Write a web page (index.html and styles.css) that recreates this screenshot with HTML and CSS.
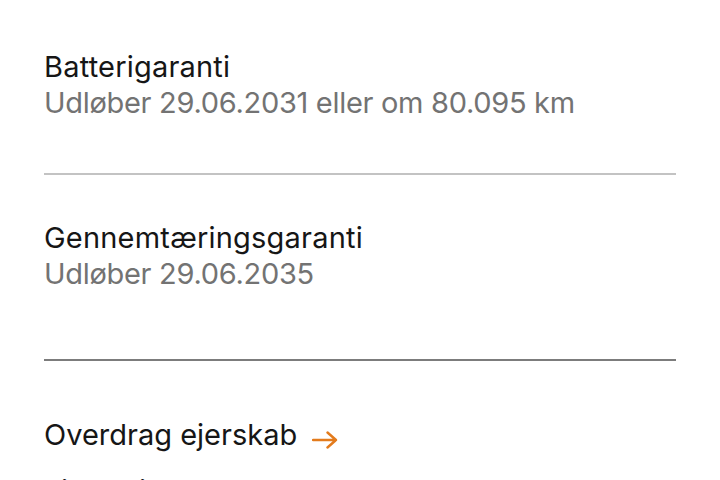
FILE: index.html
```html
<!DOCTYPE html>
<html lang="da">
<head>
<meta charset="utf-8">
<link rel="stylesheet" href="styles.css">
</head>
<body>
<main class="list">
  <section class="item item-first">
    <div class="title">Batterigaranti</div>
    <div class="sub">Udløber 29.06.2031 eller om 80.095 km</div>
  </section>
  <hr class="divider light">
  <section class="item item-second">
    <div class="title">Gennemtæringsgaranti</div>
    <div class="sub">Udløber 29.06.2035</div>
  </section>
  <hr class="divider dark">
  <a class="link link-first" href="#">
    <span>Overdrag ejerskab</span>
    <svg class="arrow" viewBox="0 0 26 18" width="26" height="18"><path d="M1 9H24M15.5 1.5L24 9L15.5 16.5" fill="none" stroke="#e37b1c" stroke-width="2.4" stroke-linecap="round" stroke-linejoin="round"/></svg>
  </a>
  <a class="link link-next" href="#">
    <span>Firmabil</span>
    <svg class="arrow" viewBox="0 0 26 18" width="26" height="18"><path d="M1 9H24M15.5 1.5L24 9L15.5 16.5" fill="none" stroke="#e37b1c" stroke-width="2.4" stroke-linecap="round" stroke-linejoin="round"/></svg>
  </a>
</main>
</body>
</html>
```

FILE: styles.css
```css
html, body {
  margin: 0;
  padding: 0;
  background: #ffffff;
  height: 480px;
  overflow: hidden;
}
body {
  font-family: "Inter", "Liberation Sans", sans-serif;
  font-size: 29px;
  line-height: 36px;
  letter-spacing: 0;
}
.list {
  display: flex;
  flex-direction: column;
  padding: 0 44px;
}
.item-first {
  padding-top: 49px;
}
.title {
  color: #161616;
  letter-spacing: 0.2px;
}
.sub {
  color: #737373;
  letter-spacing: -0.3px;
}
.divider {
  border: 0;
  height: 2px;
  margin: 0;
}
.divider.light {
  background: #c3c3c3;
  margin-top: 52px;
}
.item-second {
  margin-top: 45px;
}
.divider.dark {
  background: #7c7c7c;
  margin-top: 67px;
}
.link {
  display: flex;
  align-items: center;
  gap: 15px;
  color: #161616;
  text-decoration: none;
}
.link-first {
  margin-top: 56px;
}
.link-next {
  margin-top: 20px;
}
.arrow {
  flex: none;
  margin-top: 10px;
}
```
